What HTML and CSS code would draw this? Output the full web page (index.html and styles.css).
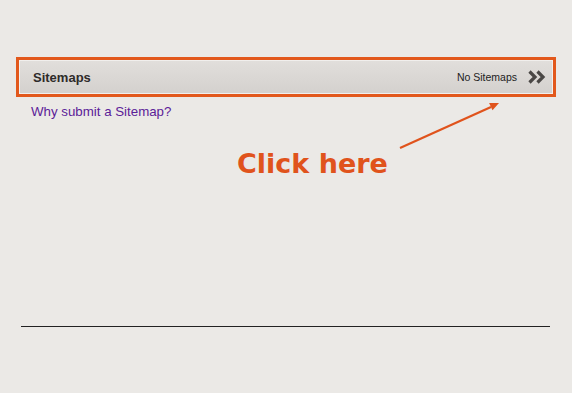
FILE: index.html
```html
<!DOCTYPE html>
<html lang="en">
<head>
    <meta charset="UTF-8">
    <meta name="viewport" content="width=device-width, initial-scale=1.0">
    <title>Sitemaps</title>
    <link rel="stylesheet" href="styles.css">
</head>
<body>
    <div class="page">
        <div class="section">
            <div class="section-bar">
                <span class="section-title">Sitemaps</span>
                <span class="section-status">No Sitemaps</span>
                <svg class="chevrons" width="18" height="14" viewBox="0 0 18 14">
                    <path d="M1.5 1.5 L7 7 L1.5 12.5" fill="none" stroke="#4a4745" stroke-width="3.2"/>
                    <path d="M9.5 1.5 L15 7 L9.5 12.5" fill="none" stroke="#4a4745" stroke-width="3.2"/>
                </svg>
            </div>
        </div>
        <a class="help-link" href="#">Why submit a Sitemap?</a>
        <div class="note">
            <span class="note-text">Click here</span>
            <svg class="note-arrow" width="120" height="70" viewBox="0 0 120 70">
                <line x1="10" y1="58" x2="101" y2="17" stroke="#e0531c" stroke-width="2.2"/>
                <path d="M109 13 L99.1 13.1 L102.5 20.3 Z" fill="#e0531c"/>
            </svg>
        </div>
        <hr class="divider">
    </div>
</body>
</html>
```

FILE: styles.css
```css
body {
    margin: 0;
    background-color: #ebe9e6;
    font-family: "Liberation Sans", Arial, sans-serif;
}
.page {
    padding: 57px 16px 0 16px;
    width: 540px;
}
.section {
    border: 3px solid #e2581c;
}
.section-bar {
    display: flex;
    align-items: center;
    height: 32px;
    padding: 0 6px 0 13px;
    border: 1px solid #f1efed;
    background: linear-gradient(#e1dedb, #d4d1ce);
}
.section-title {
    flex: 1;
    font-size: 13px;
    font-weight: bold;
    color: #2e2b2a;
}
.section-status {
    font-size: 10.5px;
    color: #222;
    margin-right: 11px;
}
.chevrons {
    display: block;
}
.help-link {
    display: block;
    height: 16px;
    margin: 7px 0 0 15px;
    font-size: 13.3px;
    color: #5b2198;
    text-decoration: none;
}
.note {
    position: relative;
    height: 206px;
}
.note-text {
    position: absolute;
    left: 221px;
    top: 30px;
    font-family: "DejaVu Sans", sans-serif;
    font-weight: bold;
    font-size: 27px;
    line-height: 27px;
    color: #e0531c;
}
.note-arrow {
    position: absolute;
    left: 374px;
    top: -30px;
}
.divider {
    margin: 0 0 0 5px;
    width: 529px;
    border: 0;
    border-top: 1px solid #222;
}
```
